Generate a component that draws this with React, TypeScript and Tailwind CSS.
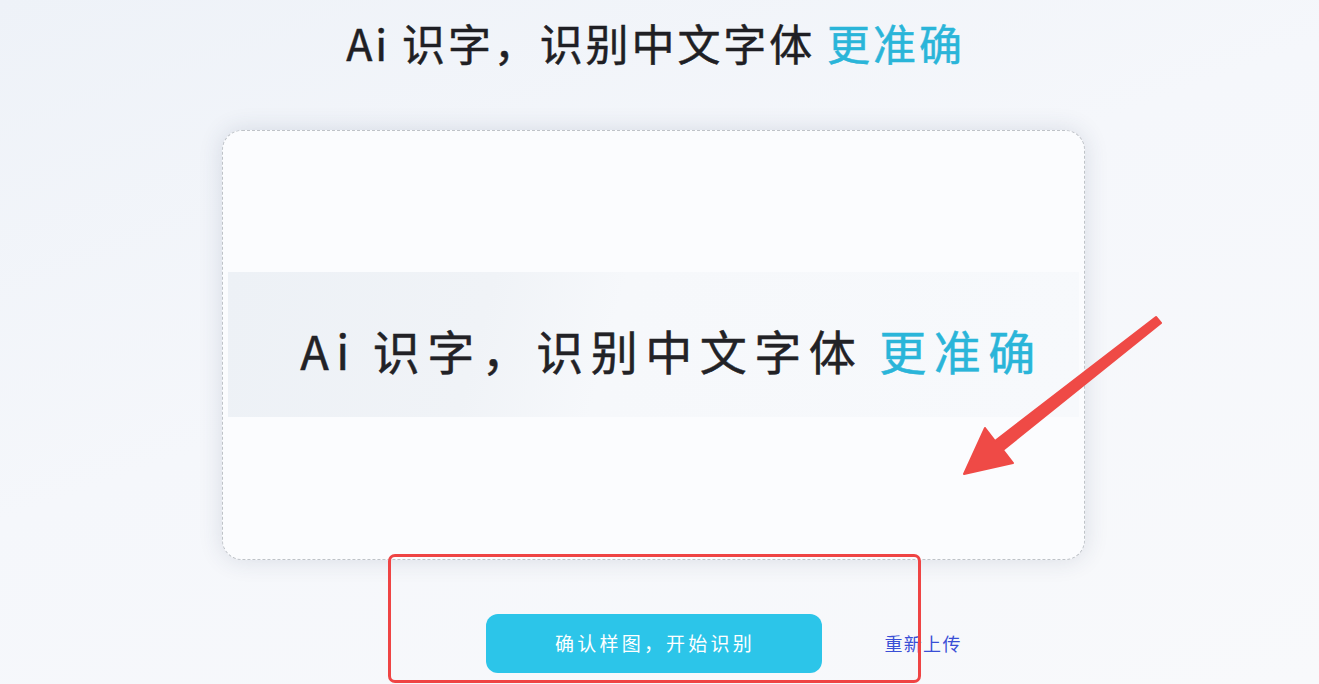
import React from "react";

const FONT = { fontFamily: '"Noto Sans CJK SC", "Noto Sans", sans-serif' };

export default function App() {
  return (
    <div
      style={FONT}
      className="relative w-[1319px] h-[684px] overflow-hidden bg-[linear-gradient(160deg,#eef2f8_0%,#f5f7fb_45%,#f8f9fb_100%)]"
    >
      <div className="flex justify-center pr-[12px] pt-[13px]">
        <div className="flex flex-col items-center">
          <div className="text-[43px] tracking-[2.9px] font-normal [-webkit-text-stroke:0.5px_currentColor] text-[#1f1f24] whitespace-nowrap leading-[58px] pl-[4px]">
            <span>Ai</span>
            <span className="ml-[12px]">识字，识别中文字体</span>
            <span className="ml-[12px] text-[#2ab5d9]">更准确</span>
          </div>
          <div className="mt-[59px] w-[863px] h-[430px] rounded-[20px] border border-dashed border-[#bfc3c8] bg-[#fbfcfe] shadow-[0_0_24px_rgba(40,60,90,0.14)] flex flex-col pt-[141px] px-[5px]">
            <div className="h-[145px] bg-[linear-gradient(105deg,#edf1f6_0%,#f0f3f7_30%,#f6f8fb_45%,#f7f9fc_100%)] flex items-center justify-center pl-[36px] pt-[12px]">
              <div className="text-[47px] tracking-[7.5px] font-normal [-webkit-text-stroke:0.5px_currentColor] text-[#222226] whitespace-nowrap">
                <span>Ai</span>
                <span className="ml-[16px]">识字，识别中文字体</span>
                <span className="ml-[16px] text-[#2ab5d9]">更准确</span>
              </div>
            </div>
          </div>
          <div className="relative mt-[54px] flex items-center">
            <button className="w-[336px] h-[59px] rounded-[12px] bg-[#2cc5e9] text-white text-[19px] tracking-[3.2px] pl-[3px] flex items-center justify-center">
              确认样图，开始识别
            </button>
            <span className="absolute left-[399px] top-[16px] whitespace-nowrap text-[18px] tracking-[1.3px] text-[#3a4fd6]">
              重新上传
            </span>
          </div>
        </div>
      </div>

      {/* annotation overlays */}
      <div className="absolute left-[388px] top-[554px] w-[533px] h-[129px] rounded-[7px] border-[3px] border-[#ef4444]" />
      <svg className="absolute left-0 top-0" width="1319" height="684">
        <polygon
          points="1156,317 1161,323 1003,450 1013,463 964,474 985,428 995,441"
          fill="#ef4a46"
          stroke="#ef4a46"
          strokeWidth="2"
          strokeLinejoin="round"
        />
      </svg>
    </div>
  );
}
